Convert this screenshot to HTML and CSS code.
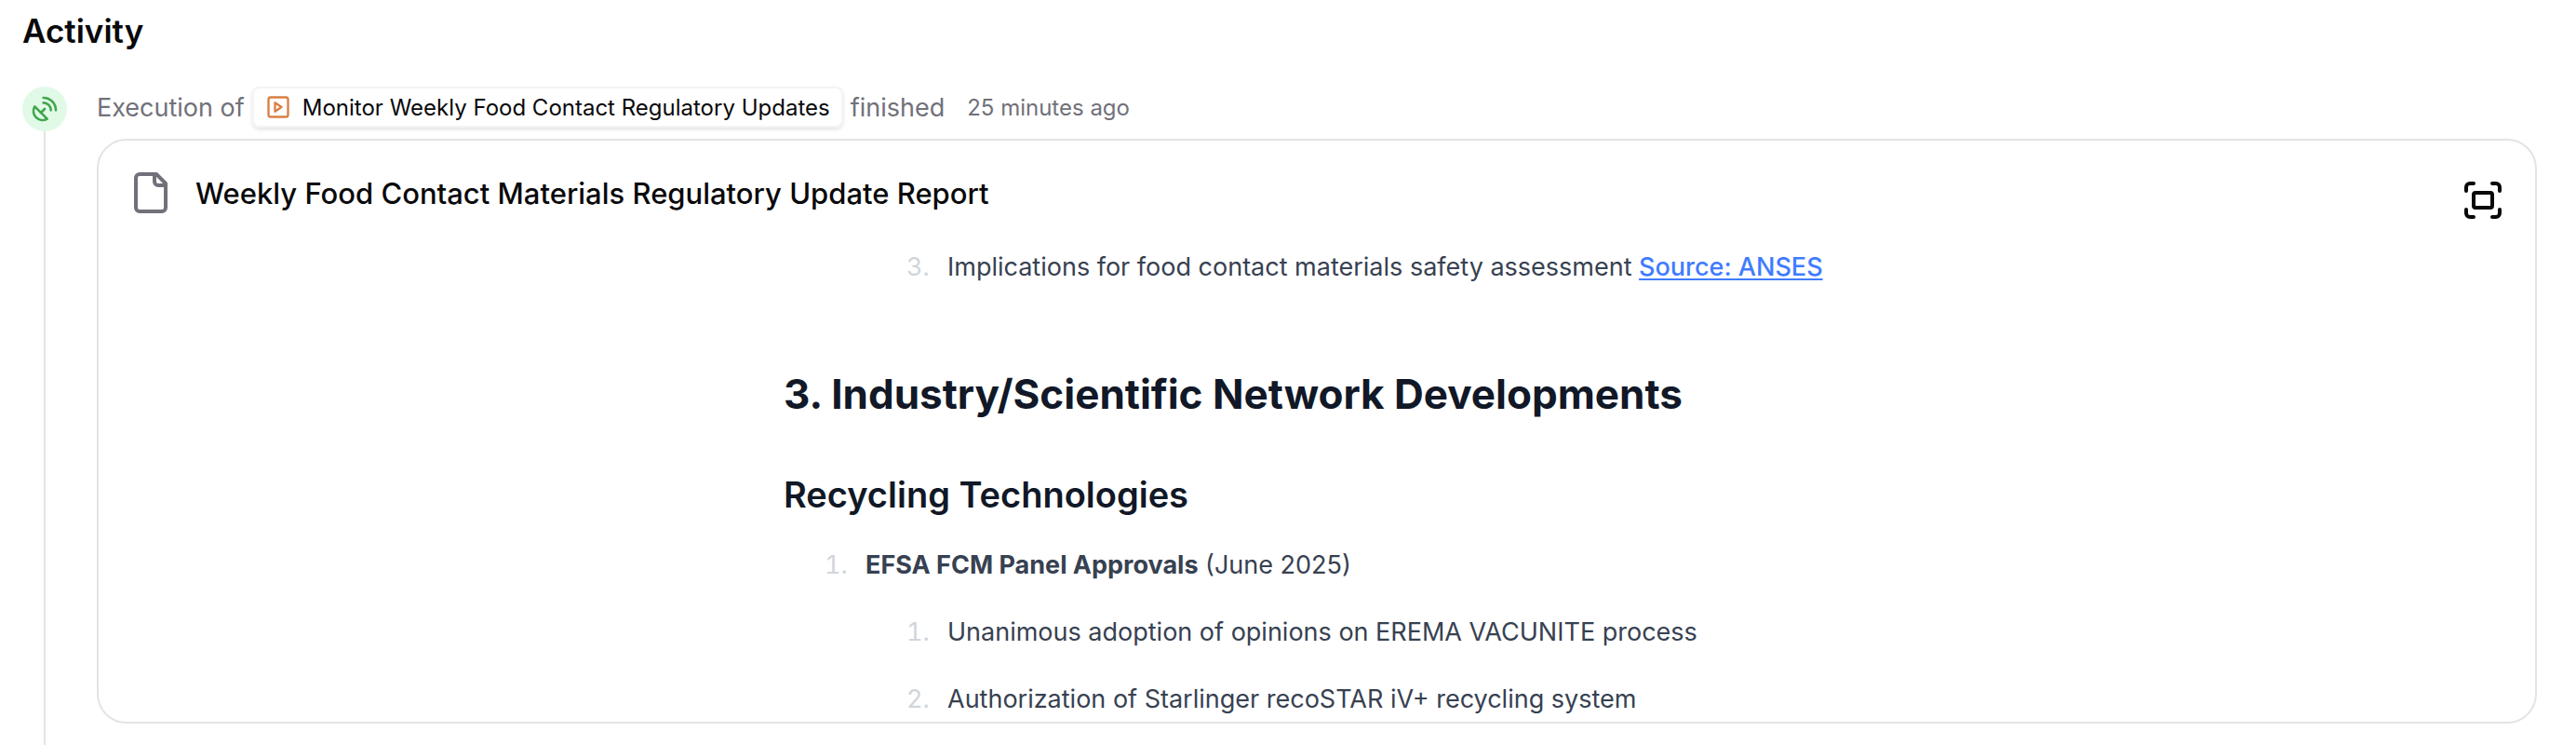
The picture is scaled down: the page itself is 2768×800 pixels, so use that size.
FILE: index.html
```html
<!DOCTYPE html>
<html lang="en">
  <head>
    <meta charset="UTF-8" />
    <meta name="viewport" content="width=device-width, initial-scale=1.0" />
    <title>Activity</title>
    <link rel="stylesheet" href="styles.css">
  </head>
  <body>
    <main class="activity">
      <h1>Activity</h1>

      <section class="event">
        <div class="rail">
          <span class="status">
            <svg class="icon" width="32" height="32" viewBox="0 0 24 24" aria-hidden="true">
              <path d="M4 10a7.31 7.31 0 0 0 10 10Z" />
              <path d="m9 15 3-3" />
              <path d="M17 13a6 6 0 0 0-6-6" />
              <path d="M21 13A10 10 0 0 0 11 3" />
            </svg>
          </span>
        </div>

        <div class="event-content">
          <div class="summary">
            <span>Execution of</span>
            <a class="chip" href="#">
              <svg class="icon" width="28" height="28" viewBox="0 0 24 24" aria-hidden="true">
                <rect x="3" y="3" width="18" height="18" rx="2" />
                <path d="m9 8 6 4-6 4Z" />
              </svg>
              Monitor Weekly Food Contact Regulatory Updates
            </a>
            <span>finished</span>
            <time>25 minutes ago</time>
          </div>

          <article class="card">
            <header class="card-header">
              <svg class="icon file-icon" width="48" height="48" viewBox="0 0 24 24" aria-hidden="true">
                <path d="M15 2H6a2 2 0 0 0-2 2v16a2 2 0 0 0 2 2h12a2 2 0 0 0 2-2V7Z" />
                <path d="M14 2v4a2 2 0 0 0 2 2h4" />
              </svg>
              <h2>Weekly Food Contact Materials Regulatory Update Report</h2>
              <button type="button" class="expand" aria-label="Fullscreen">
                <svg class="icon" width="48" height="48" viewBox="0 0 24 24" aria-hidden="true">
                  <path d="M3 7V5a2 2 0 0 1 2-2h2" />
                  <path d="M17 3h2a2 2 0 0 1 2 2v2" />
                  <path d="M21 17v2a2 2 0 0 1-2 2h-2" />
                  <path d="M7 21H5a2 2 0 0 1-2-2v-2" />
                  <rect x="7" y="8" width="10" height="8" rx="1" />
                </svg>
              </button>
            </header>

            <div class="prose">
              <ol class="nested" start="3">
                <li>Implications for food contact materials safety assessment <a href="#">Source: ANSES</a></li>
              </ol>

              <h3>3. Industry/Scientific Network Developments</h3>
              <h4>Recycling Technologies</h4>
              <ol>
                <li>
                  <strong>EFSA FCM Panel Approvals</strong> (June 2025)
                  <ol>
                    <li>Unanimous adoption of opinions on EREMA VACUNITE process</li>
                    <li>Authorization of Starlinger recoSTAR iV+ recycling system</li>
                  </ol>
                </li>
              </ol>
            </div>
          </article>
        </div>
      </section>
    </main>
  </body>
</html>
```
FILE: styles.css
```css
:root {
  --text: #09090b;
  --muted: #71717a;
  --border: #e4e4e4;
  --prose-heading: #111827;
  --prose-body: #374151;
  --prose-marker: #d1d5db;
  --link: #407bff;
}

* {
  box-sizing: border-box;
}

body {
  margin: 0;
  background: #fff;
  color: var(--text);
  font-family: Inter, "Liberation Sans", sans-serif;
  font-size: 27px;
}

h1,
h2,
h3,
h4,
ol {
  margin: 0;
}

.icon {
  flex: none;
  display: block;
  fill: none;
  stroke: currentColor;
  stroke-width: 2;
  stroke-linecap: round;
  stroke-linejoin: round;
}

.activity {
  display: flex;
  flex-direction: column;
  min-height: 100vh;
  padding: 13px 42px 0 24px;
}

h1 {
  margin-bottom: 40px;
  font-size: 35px;
  font-weight: 600;
  line-height: 40px;
}

.event {
  display: flex;
  flex: 1;
  gap: 32px;
}

/* timeline */
.rail {
  display: flex;
  flex-direction: column;
  align-items: center;
}

.rail::after {
  content: "";
  flex: 1;
  width: 2px;
  background: var(--border);
}

.status {
  display: flex;
  align-items: center;
  justify-content: center;
  width: 48px;
  height: 48px;
  border-radius: 50%;
  background: #e1fae8;
  color: #40a64d;
}

.event-content {
  flex: 1;
  min-width: 0;
}

.summary {
  display: flex;
  flex-wrap: wrap;
  align-items: center;
  gap: 8px;
  margin-bottom: 12px;
  color: var(--muted);
}

.summary time {
  margin-left: 16px;
  font-size: 24px;
}

.chip {
  display: flex;
  align-items: center;
  gap: 12px;
  height: 44px;
  padding: 0 12px;
  border: 2px solid #f4f4f5;
  border-radius: 8px;
  box-shadow: 0 2px 4px rgba(0, 0, 0, 0.12);
  color: var(--text);
  font-size: 24px;
  text-decoration: none;
}

.chip .icon {
  color: #d97f43;
}

/* report card */
.card {
  overflow: hidden;
  border: 2px solid var(--border);
  border-radius: 32px;
}

.card-header {
  display: flex;
  align-items: flex-start;
  gap: 24px;
  padding: 32px 32px 16px;
}

.card-header h2 {
  flex: 1;
  font-size: 31px;
  font-weight: 500;
  line-height: 50px;
}

.file-icon {
  color: var(--muted);
}

.expand {
  padding: 8px 0;
  border: 0;
  background: none;
  color: var(--text);
  cursor: pointer;
}

.prose {
  max-width: 1146px;
  margin: 0 auto;
  color: var(--prose-body);
  line-height: 48px;
}

.prose h3,
.prose h4 {
  color: var(--prose-heading);
}

.prose h3 {
  margin: 80px 0 48px;
  font-size: 44px;
  font-weight: 700;
  line-height: 64px;
}

.prose h4 {
  margin-bottom: 24px;
  font-size: 38px;
  font-weight: 600;
  line-height: 56px;
}

.prose ol {
  padding-left: 76px;
}

.prose .nested {
  margin-left: 88px;
}

.prose li {
  padding-left: 12px;
}

.prose li::marker {
  color: var(--prose-marker);
}

.prose li ol,
.prose li + li {
  margin-top: 24px;
}

.prose strong {
  font-weight: 700;
}

.prose a {
  color: var(--link);
  font-weight: 500;
  text-decoration-thickness: 2px;
  text-underline-offset: 3px;
}
```
